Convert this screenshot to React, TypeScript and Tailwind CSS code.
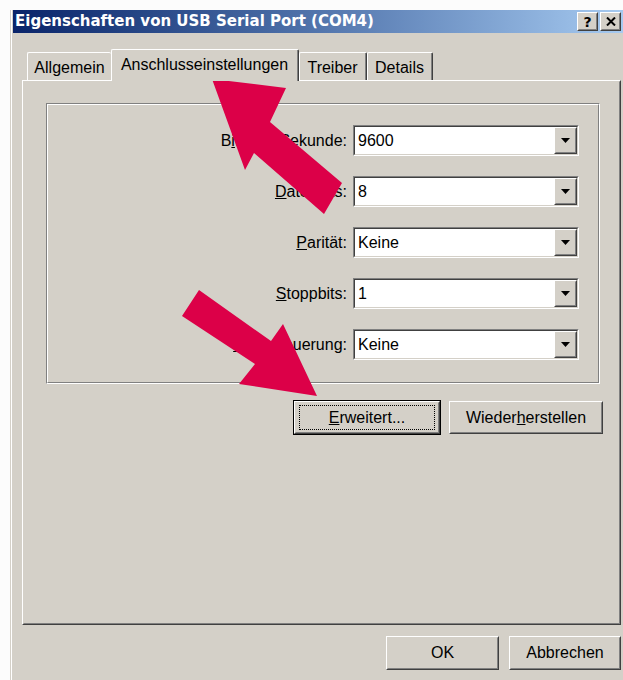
import type { ReactNode } from 'react';

// Win2000 style property sheet: "Eigenschaften von USB Serial Port (COM4)"

function Raised({ className = '', children }: { className?: string; children?: ReactNode }) {
  return (
    <div
      className={`border border-t-white border-l-white border-r-[#404040] border-b-[#404040] bg-[#d4d0c8] ${className}`}
    >
      <div className="flex h-full w-full items-center justify-center border border-t-[#d4d0c8] border-l-[#d4d0c8] border-r-[#808080] border-b-[#808080]">
        {children}
      </div>
    </div>
  );
}

function Combo({ value }: { value: string }) {
  return (
    <div className="h-[31px] w-[226px] border border-t-[#808080] border-l-[#808080] border-r-white border-b-white">
      <div className="flex h-full items-center border border-t-[#404040] border-l-[#404040] border-r-[#d4d0c8] border-b-[#d4d0c8] bg-white pl-[3px]">
        <span className="flex-1">{value}</span>
        <Raised className="h-full w-[23px]">
          <svg width="9" height="5" viewBox="0 0 9 5">
            <polygon points="0,0 9,0 4.5,5" fill="black" />
          </svg>
        </Raised>
      </div>
    </div>
  );
}

const settings = [
  { pre: 'B', key: 'i', post: 'ts pro Sekunde:', value: '9600' },
  { pre: '', key: 'D', post: 'atenbits:', value: '8' },
  { pre: '', key: 'P', post: 'arität:', value: 'Keine' },
  { pre: '', key: 'S', post: 'toppbits:', value: '1' },
  { pre: '', key: 'F', post: 'lusssteuerung:', value: 'Keine' },
];

const tabs = [
  { label: 'Allgemein', width: 'w-[84px]', active: false },
  { label: 'Anschlusseinstellungen', width: 'w-[188px]', active: true },
  { label: 'Treiber', width: 'w-[68px]', active: false },
  { label: 'Details', width: 'w-[66px]', active: false },
];

export default function App() {
  return (
    <div className="relative h-[680px] w-[623px] overflow-hidden bg-[#fcfcfc] pl-[10px] pt-[10px] font-['Liberation_Sans',Arial,sans-serif] text-[16px] leading-none text-black">
      <div className="flex h-[700px] w-[616px] flex-col border-l border-l-[#d4d0c8] bg-[#d4d0c8] pr-[3px]">
        <div className="flex flex-1 flex-col border-l border-l-white pl-px">
          {/* title bar */}
          <div className="flex h-[23px] items-center bg-linear-to-r from-[#0a246a] to-[#a6caf0] pl-[2px] pr-[2px]">
            <span className="flex-1 font-['DejaVu_Sans',sans-serif] text-[15px] font-bold text-white">
              Eigenschaften von USB Serial Port (COM4)
            </span>
            <div className="flex gap-[2px]">
              <Raised className="h-[19px] w-[21px]">
                <span className="font-['DejaVu_Sans',sans-serif] text-[14px] font-bold">?</span>
              </Raised>
              <Raised className="h-[19px] w-[21px]">
                <svg width="10" height="9" viewBox="0 0 10 9">
                  <path d="M1 0.5 L9 8.5 M9 0.5 L1 8.5" stroke="black" strokeWidth="2" />
                </svg>
              </Raised>
            </div>
          </div>

          {/* body */}
          <div className="flex flex-col pl-[9px] pr-[2px] pt-[16px]">
            <div className="flex h-[31px] items-end pl-[5px]">
              {tabs.map((t) =>
                t.active ? (
                  <div
                    key={t.label}
                    className={`relative z-10 -mb-px flex h-[32px] ${t.width} items-center justify-center rounded-t-[2px] border-t border-l border-r border-t-white border-l-white border-r-[#404040] bg-[#d4d0c8]`}
                  >
                    <div className="flex h-full w-full items-center justify-center border-r border-r-[#808080] pb-[2px]">
                      {t.label}
                    </div>
                  </div>
                ) : (
                  <div
                    key={t.label}
                    className={`flex h-[28px] ${t.width} items-center justify-center rounded-t-[2px] border-t border-l border-t-white border-l-white ${
                      t.label === 'Allgemein' ? '' : 'border-r border-r-[#404040]'
                    }`}
                  >
                    <div
                      className={`flex h-full w-full items-center justify-center pt-[2px] ${
                        t.label === 'Allgemein' ? '' : 'border-r border-r-[#808080]'
                      }`}
                    >
                      {t.label}
                    </div>
                  </div>
                ),
              )}
            </div>

            {/* tab page */}
            <div className="h-[545px] border border-t-white border-l-white border-r-[#404040] border-b-[#404040]">
              <div className="flex h-full flex-col border border-t-[#d4d0c8] border-l-[#d4d0c8] border-r-[#808080] border-b-[#808080] pl-[22px] pt-[21px]">
                <div className="h-[281px] w-[554px] border border-t-[#808080] border-l-[#808080] border-r-white border-b-white">
                  <div className="flex h-full flex-col gap-[20px] border border-t-white border-l-white border-r-[#808080] border-b-[#808080] pr-[19px] pt-[20px]">
                    {settings.map((s) => (
                      <div key={s.post} className="flex items-center justify-end gap-[6px]">
                        <span>
                          {s.pre}
                          <u className="underline-offset-1">{s.key}</u>
                          {s.post}
                        </span>
                        <Combo value={s.value} />
                      </div>
                    ))}
                  </div>
                </div>

                <div className="mt-[16px] flex items-center justify-end gap-[8px] pr-[16px]">
                  <div className="h-[35px] w-[148px] border border-black">
                    <Raised className="h-full w-full">
                      <div className="flex h-[25px] w-[136px] items-center justify-center border border-dotted border-black">
                        <span>
                          <u className="underline-offset-1">E</u>rweitert...
                        </span>
                      </div>
                    </Raised>
                  </div>
                  <Raised className="h-[33px] w-[154px]">
                    <span>
                      Wieder<u className="underline-offset-1">h</u>erstellen
                    </span>
                  </Raised>
                </div>
              </div>
            </div>

            <div className="mt-[11px] flex justify-end gap-[10px]">
              <Raised className="h-[34px] w-[113px]">OK</Raised>
              <Raised className="h-[34px] w-[112px]">Abbrechen</Raised>
            </div>
          </div>
        </div>
      </div>

      {/* red marker arrows */}
      <svg className="pointer-events-none absolute inset-0" width="623" height="680" viewBox="0 0 623 680">
        <polygon points="212,79 286,88 270,122 342,183 324,214 254,153 245,170" fill="#dc0048" />
        <polygon points="317,396 239,384 255,364 182,316 199,290 271,341 283,324" fill="#dc0048" />
      </svg>
    </div>
  );
}
